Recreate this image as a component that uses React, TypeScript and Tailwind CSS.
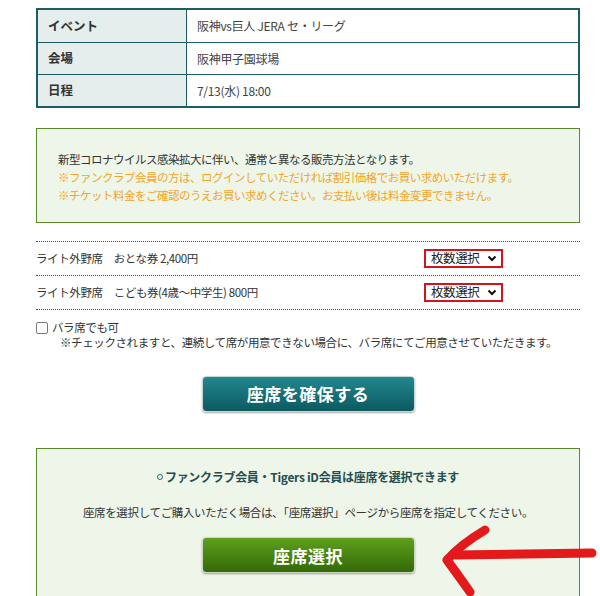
import React from "react";

const font = { fontFamily: '"Noto Sans CJK JP", "Noto Sans", sans-serif' };

export default function App() {
  return (
    <div
      className="relative w-[600px] h-[596px] overflow-hidden bg-white text-[#333] text-[12px]"
      style={font}
    >
      <div className="ml-[36px] w-[544px] pt-[8px]">
        {/* Info table */}
        <div className="border-2 border-[#1d5e62]">
          {[
            ["イベント", "阪神vs巨人 JERA セ・リーグ", "h-[32px]"],
            ["会場", "阪神甲子園球場", "h-[32px]"],
            ["日程", "7/13(水) 18:00", "h-[32px]"],
          ].map(([k, v, h], i) => (
            <div
              key={i}
              className={`flex ${h} ${i > 0 ? "border-t border-[#1d5e62]" : ""}`}
            >
              <div className="w-[149px] shrink-0 bg-[#e6eded] border-r border-[#1d5e62] flex items-center pl-[10px] font-bold text-[#333] text-[12.5px]">
                {k}
              </div>
              <div className="flex items-center pl-[10px] text-[12px] text-[#444] tracking-[-0.3px]">
                {v}
              </div>
            </div>
          ))}
        </div>

        {/* Notice */}
        <div className="mt-[20px] h-[95px] border border-[#5b8a2c] bg-[#eef5e9] pl-[21px] pt-[21px] text-[11.5px] leading-[18px] tracking-[-0.5px]">
          <div className="text-[#333]">
            新型コロナウイルス感染拡大に伴い、通常と異なる販売方法となります。
          </div>
          <div className="text-[#f2a52a]">
            ※ファンクラブ会員の方は、ログインしていただければ割引価格でお買い求めいただけます。
          </div>
          <div className="text-[#f2a52a]">
            ※チケット料金をご確認のうえお買い求めください。お支払い後は料金変更できません。
          </div>
        </div>

        {/* Ticket rows */}
        <div className="mt-[18px] border-t border-dotted border-[#1d5e62]">
          {[
            "ライト外野席　おとな券 2,400円",
            "ライト外野席　こども券(4歳～中学生) 800円",
          ].map((t, i) => (
            <div
              key={i}
              className="flex items-center justify-between h-[34px] border-b border-dotted border-[#1d5e62] tracking-[-0.4px]"
            >
              <span className="text-[11.5px]">{t}</span>
              <div className="mr-[77px] w-[79px] h-[19px] border-2 border-[#d4141c] bg-white flex items-center justify-between pl-[5px] pr-[4px] text-[12.5px] text-[#222]">
                <span>枚数選択</span>
                <svg width="10" height="7" viewBox="0 0 10 7">
                  <path
                    d="M1.5 1.5 L5 5 L8.5 1.5"
                    fill="none"
                    stroke="#111"
                    strokeWidth="2"
                  />
                </svg>
              </div>
            </div>
          ))}
        </div>

        {/* Checkbox */}
        <div className="mt-[10px] flex items-start gap-[4px] tracking-[-0.4px]">
          <div className="mt-[2px] w-[12px] h-[12px] border border-[#777] rounded-[2px] bg-white shrink-0" />
          <div className="text-[11.5px] leading-[15px]">
            <div>バラ席でも可</div>
            <div className="pl-[8px]">
              ※チェックされますと、連続して席が用意できない場合に、バラ席にてご用意させていただきます。
            </div>
          </div>
        </div>

        {/* Reserve button */}
        <div className="mt-[26px] flex justify-center">
          <div className="w-[213px] h-[36px] rounded-[4px] border border-[#c8d6d6] shadow-[0_1px_2px_rgba(0,0,0,0.35)] bg-gradient-to-b from-[#22888f] to-[#0c5a60] flex items-center justify-center text-white font-bold text-[17px] tracking-[0.5px]">
            座席を確保する
          </div>
        </div>

        {/* Seat select box */}
        <div className="mt-[36px] h-[160px] border border-[#5b8a2c] bg-[#eef5e9] flex flex-col items-center">
          <div className="mt-[19px] text-[12px] font-bold text-[#1f4f53] tracking-[-0.3px] flex items-center">
            <span className="inline-block w-[6px] h-[6px] rounded-full border-[1.5px] border-[#1f6f73] mr-[2px]" />
            ファンクラブ会員・Tigers iD会員は座席を選択できます
          </div>
          <div className="mt-[18px] text-[11.5px] tracking-[-0.35px]">
            座席を選択してご購入いただく場合は、「座席選択」ページから座席を指定してください。
          </div>
          <div className="mt-[16px] w-[213px] h-[36px] rounded-[4px] border border-[#cfd8c8] shadow-[0_1px_2px_rgba(0,0,0,0.35)] bg-gradient-to-b from-[#5fa01d] to-[#336a06] flex items-center justify-center text-white font-bold text-[17px] tracking-[0.5px]">
            座席選択
          </div>
        </div>
      </div>

      {/* Red arrow annotation */}
      <svg
        className="absolute left-0 top-0 pointer-events-none"
        width="600"
        height="596"
        viewBox="0 0 600 596"
      >
        <path
          d="M592 553 L456 555"
          fill="none"
          stroke="#e3191c"
          strokeWidth="9"
          strokeLinecap="round"
        />
        <path
          d="M485 530 Q460 545 447 560 Q458 575 470 592"
          fill="none"
          stroke="#e3191c"
          strokeWidth="9"
          strokeLinecap="round"
          strokeLinejoin="round"
        />
      </svg>
    </div>
  );
}
